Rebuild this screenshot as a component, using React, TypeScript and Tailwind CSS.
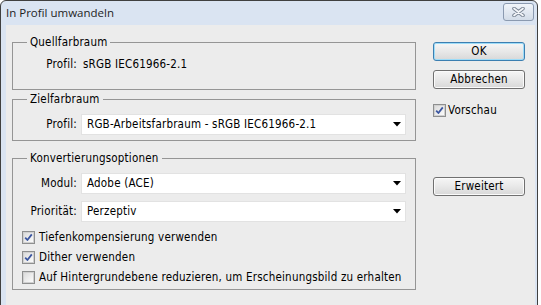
import type { ReactNode } from "react";

const ui = "font-['DejaVu_Sans_Condensed','DejaVu_Sans',sans-serif] text-[11.5px] leading-[13px] tracking-[0.2px] text-black";

function CheckBox({ checked }: { checked: boolean }) {
  return (
    <span className="flex size-[13px] shrink-0 items-center justify-center border border-[#8e8f8f] bg-white">
      <span className="flex size-[11px] items-center justify-center border border-[#d0d0d0] bg-gradient-to-br from-[#dcdcdc] to-[#fbfbfb]">
        {checked ? (
          <svg width="9" height="9" viewBox="0 0 9 9" aria-hidden="true">
            <path d="M1.2 4.6 L3.4 7 L7.8 1.4" fill="none" stroke="#3b56a0" strokeWidth="1.8" strokeLinejoin="round" />
          </svg>
        ) : null}
      </span>
    </span>
  );
}

function Dropdown({ value }: { value: string }) {
  return (
    <div className="flex h-[21px] w-[325px] items-center justify-between border border-[#e2e2e2] bg-white pl-[5px] pr-[4px]">
      <span>{value}</span>
      <svg width="8" height="5" viewBox="0 0 8 5" aria-hidden="true">
        <polygon points="0,0 8,0 4,4.5" fill="#000" />
      </svg>
    </div>
  );
}

function Group({ title, className, children }: { title: string; className: string; children: ReactNode }) {
  return (
    <fieldset className={`w-[404px] border border-[#959595] ${className}`}>
      <legend className="ml-[14px] px-[3px] leading-[13px]">{title}</legend>
      {children}
    </fieldset>
  );
}

function Button({ label, primary }: { label: string; primary?: boolean }) {
  return (
    <button
      className={`h-[19px] w-[92px] rounded-[3px] border bg-gradient-to-b from-[#f6f6f6] via-[#e8e8e8] to-[#d8d8d8] text-center ${
        primary
          ? "border-[#3c7fb1] shadow-[inset_0_0_0_1px_#9ddcf8]"
          : "border-[#707070] shadow-[inset_0_0_0_1px_#fbfbfb]"
      }`}
    >
      {label}
    </button>
  );
}

function CheckRow({ checked, label }: { checked: boolean; label: string }) {
  return (
    <div className="flex h-[20px] items-center gap-[4px] pl-[9px]">
      <CheckBox checked={checked} />
      <span>{label}</span>
    </div>
  );
}

export default function App() {
  return (
    <div className="h-[305px] w-[541px] overflow-hidden bg-white">
      <div className="flex h-[312px] w-[538px] flex-col rounded-t-[6px] border border-[#404040] bg-[#dae4f2]">
        <div className="flex h-[24px] items-start justify-between pl-[5px] pr-[3px] pt-[2px]">
          <span className="mt-[3px] font-['Open_Sans','Noto_Sans',sans-serif] text-[11.5px] leading-[14px] text-[#1e1e1e]">
            In Profil umwandeln
          </span>
          <div className="flex h-[18px] w-[31px] items-center justify-center rounded-[3px] border border-[#8b9ab0] bg-gradient-to-b from-[#f1f5fa] to-[#d3dce8]">
            <svg width="13" height="10" viewBox="0 0 13 10" aria-hidden="true">
              <path d="M2 1.5 L11 8.5 M11 1.5 L2 8.5" stroke="#7a8594" strokeWidth="3.6" strokeLinecap="round" />
              <path d="M2 1.5 L11 8.5 M11 1.5 L2 8.5" stroke="#f5f7fa" strokeWidth="1.7" strokeLinecap="round" />
            </svg>
          </div>
        </div>
        <div className="flex-1 pb-[5px] pl-[5px] pr-[2px]">
          <div className={`flex h-full bg-[#ececec] pl-[6px] pt-[11px] ${ui}`}>
            <div className="flex flex-col">
              <Group title="Quellfarbraum" className="h-[54px]">
                <div className="flex pt-[9px]">
                  <span className="w-[64px] text-right">Profil:</span>
                  <span className="ml-[6px]">sRGB IEC61966-2.1</span>
                </div>
              </Group>
              <Group title="Zielfarbraum" className="mt-[3px] h-[48px]">
                <div className="flex items-center pt-[8px]">
                  <span className="w-[64px] text-right">Profil:</span>
                  <div className="ml-[4px]">
                    <Dropdown value="RGB-Arbeitsfarbraum - sRGB IEC61966-2.1" />
                  </div>
                </div>
              </Group>
              <Group title="Konvertierungsoptionen" className="mt-[11px] h-[138px]">
                <div className="flex items-center pt-[8px]">
                  <span className="w-[64px] text-right">Modul:</span>
                  <div className="ml-[4px]">
                    <Dropdown value="Adobe (ACE)" />
                  </div>
                </div>
                <div className="mt-[7px] flex items-center">
                  <span className="w-[64px] text-right">Priorität:</span>
                  <div className="ml-[4px]">
                    <Dropdown value="Perzeptiv" />
                  </div>
                </div>
                <div className="mt-[5px]">
                  <CheckRow checked label="Tiefenkompensierung verwenden" />
                  <CheckRow checked label="Dither verwenden" />
                  <CheckRow checked={false} label="Auf Hintergrundebene reduzieren, um Erscheinungsbild zu erhalten" />
                </div>
              </Group>
            </div>
            <div className="ml-[17px] flex flex-col pt-[6px]">
              <Button label="OK" primary />
              <div className="mt-[9px]">
                <Button label="Abbrechen" />
              </div>
              <div className="mt-[15px] flex items-center gap-[2px]">
                <CheckBox checked />
                <span>Vorschau</span>
              </div>
              <div className="mt-[60px]">
                <Button label="Erweitert" />
              </div>
            </div>
          </div>
        </div>
      </div>
    </div>
  );
}
